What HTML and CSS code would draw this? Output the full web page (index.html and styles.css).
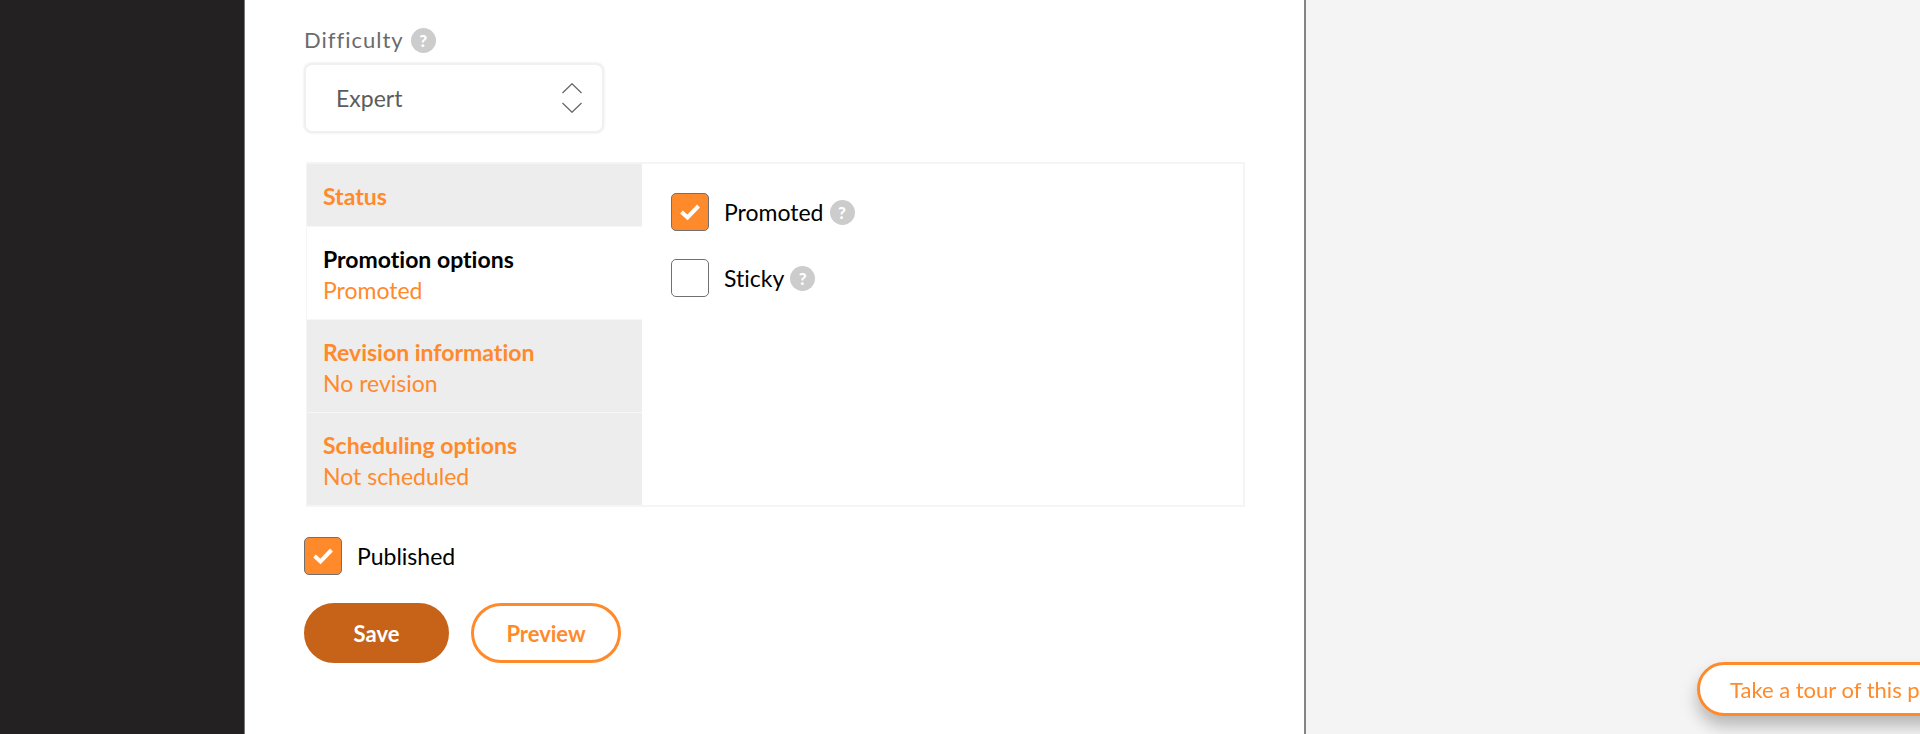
FILE: index.html
```
<!DOCTYPE html>
<html lang="en">

<head>
    <meta charset="utf-8">
    <title>Edit content</title>
    <link rel="stylesheet" href="styles.css">
</head>

<body>
    <div class="page">
        <nav class="sidebar"></nav>

        <main class="content">
            <form class="edit-form">
                <div class="field">
                    <div class="field-label">
                        <label for="difficulty">Difficulty</label>
                        <button type="button" class="help">?</button>
                    </div>
                    <div class="select-wrap">
                        <select id="difficulty">
                            <option>Expert</option>
                        </select>
                        <svg class="select-arrows" viewBox="0 0 20 30">
                            <path d="M0.5 10 L10 0.7 L19.5 10 M0.5 20 L10 29.3 L19.5 20" fill="none" stroke="#666" stroke-width="1.2" />
                        </svg>
                    </div>
                </div>

                <div class="vertical-tabs">
                    <ul class="tab-menu">
                        <li class="tab"><a href="#status"><strong>Status</strong></a></li>
                        <li class="tab selected"><a href="#promotion"><strong>Promotion options</strong><span>Promoted</span></a></li>
                        <li class="tab"><a href="#revision"><strong>Revision information</strong><span>No revision</span></a></li>
                        <li class="tab"><a href="#scheduling"><strong>Scheduling options</strong><span>Not scheduled</span></a></li>
                    </ul>
                    <div class="tab-pane" id="promotion">
                        <div class="check-row">
                            <span class="check">
                                <input type="checkbox" id="promoted" checked>
                                <svg class="tick" viewBox="0 0 22 18"><path d="M2.5 9 L8.5 14.5 L19.5 3" fill="none" stroke="#fff" stroke-width="4" /></svg>
                            </span>
                            <label for="promoted">Promoted</label>
                            <button type="button" class="help">?</button>
                        </div>
                        <div class="check-row">
                            <span class="check">
                                <input type="checkbox" id="sticky">
                            </span>
                            <label for="sticky">Sticky</label>
                            <button type="button" class="help">?</button>
                        </div>
                    </div>
                </div>

                <div class="check-row">
                    <span class="check">
                        <input type="checkbox" id="published" checked>
                        <svg class="tick" viewBox="0 0 22 18"><path d="M2.5 9 L8.5 14.5 L19.5 3" fill="none" stroke="#fff" stroke-width="4" /></svg>
                    </span>
                    <label for="published">Published</label>
                </div>

                <div class="actions">
                    <button type="submit" class="btn btn-save">Save</button>
                    <button type="button" class="btn btn-preview">Preview</button>
                </div>
            </form>
        </main>

        <aside class="right-area"></aside>
    </div>

    <button type="button" class="tour">Take a tour of this page</button>
</body>

</html>
```
FILE: styles.css
```
* {
    box-sizing: border-box;
}

body {
    margin: 0;
    background: #f4f4f4;
    color: #000;
    font-family: Lato, "Open Sans", sans-serif;
    font-size: 23px;
    font-variant-ligatures: none;
    line-height: 32px;
}

button,
select {
    font-family: inherit;
    font-size: inherit;
    cursor: pointer;
}

.page {
    display: grid;
    grid-template-columns: 245px minmax(0, 1fr) 32%;
    min-height: 100vh;
}

.sidebar {
    background: #232122;
    border-right: 1px solid #777;
}

.content {
    background: #fff;
    border-right: 2px solid #828586;
    padding: 24px 59px 48px 59px;
}

/* Difficulty field */
.field-label {
    display: flex;
    align-items: center;
    gap: 7px;
    color: #6b6b6b;
    font-size: 22px;
    letter-spacing: 1px;
}

.help {
    width: 25px;
    height: 25px;
    padding: 0;
    border: 0;
    border-radius: 50%;
    background: #ccc;
    color: #fff;
    font-size: 17px;
    font-weight: 900;
    line-height: 25px;
    text-align: center;
}

.select-wrap {
    position: relative;
    width: 300px;
    max-width: 100%;
    margin-top: 7px;
}

.select-wrap select {
    display: block;
    appearance: none;
    width: 100%;
    height: 70px;
    padding: 0 64px 0 30px;
    border: 2px solid #f0f0f0;
    border-radius: 8px;
    background: #fff;
    box-shadow: 0 0 3px #e8e8e8;
    color: #5c5c5c;
}

.select-arrows {
    position: absolute;
    top: 20px;
    right: 22px;
    width: 20px;
    height: 30px;
    pointer-events: none;
}

/* Vertical tabs */
.vertical-tabs {
    display: grid;
    grid-template-columns: 335px minmax(0, 1fr);
    margin: 29px 0 30px 2px;
    border: 2px solid #f5f5f5;
    border-left-width: 1px;
}

.tab-menu {
    margin: 0;
    padding: 0;
    list-style: none;
}

.tab {
    border-bottom: 1px solid #f7f7f7;
    background: #ededed;
}

.tab:last-child {
    border-bottom: 0;
}

.tab.selected {
    background: #fff;
}

.tab a {
    display: block;
    padding: 16px 16px 14px;
    color: #ff8a2b;
    text-decoration: none;
}

.tab strong,
.tab span {
    display: block;
}

.tab span {
    line-height: 30px;
}

.tab.selected strong {
    color: #000;
}

.tab-pane {
    display: flex;
    flex-direction: column;
    gap: 28px;
    padding: 29px;
}

/* Checkboxes */
.check-row {
    display: flex;
    align-items: center;
}

.check {
    display: grid;
    place-items: center;
    margin-right: 15px;
}

.check input,
.tick {
    grid-area: 1 / 1;
}

.check input {
    appearance: none;
    width: 38px;
    height: 38px;
    margin: 0;
    border: 1px solid #707070;
    border-radius: 5px;
    background: #fff;
}

.check input:checked {
    background: #ff8a2b;
}

.tick {
    width: 22px;
    height: 18px;
    pointer-events: none;
}

.check-row .help {
    margin-left: 6px;
}

/* Buttons */
.actions {
    display: flex;
    gap: 22px;
    margin-top: 28px;
}

.btn {
    height: 60px;
    border: 3px solid #ff8a2b;
    border-radius: 30px;
    background: #fff;
    color: #ff8a2b;
    font-size: 22px;
    font-weight: bold;
}

.btn-save {
    min-width: 145px;
    border-color: #c66319;
    background: #c66319;
    color: #fff;
}

.btn-preview {
    min-width: 150px;
}

.tour {
    position: fixed;
    right: -83px;
    bottom: 18px;
    width: 306px;
    height: 54px;
    padding: 0 30px;
    border: 3px solid #ff8a2b;
    border-radius: 27px;
    background: #fff;
    box-shadow: 0 10px 16px rgba(0, 0, 0, 0.25);
    color: #ff8a2b;
    font-size: 22px;
    text-align: left;
    white-space: nowrap;
}
```
